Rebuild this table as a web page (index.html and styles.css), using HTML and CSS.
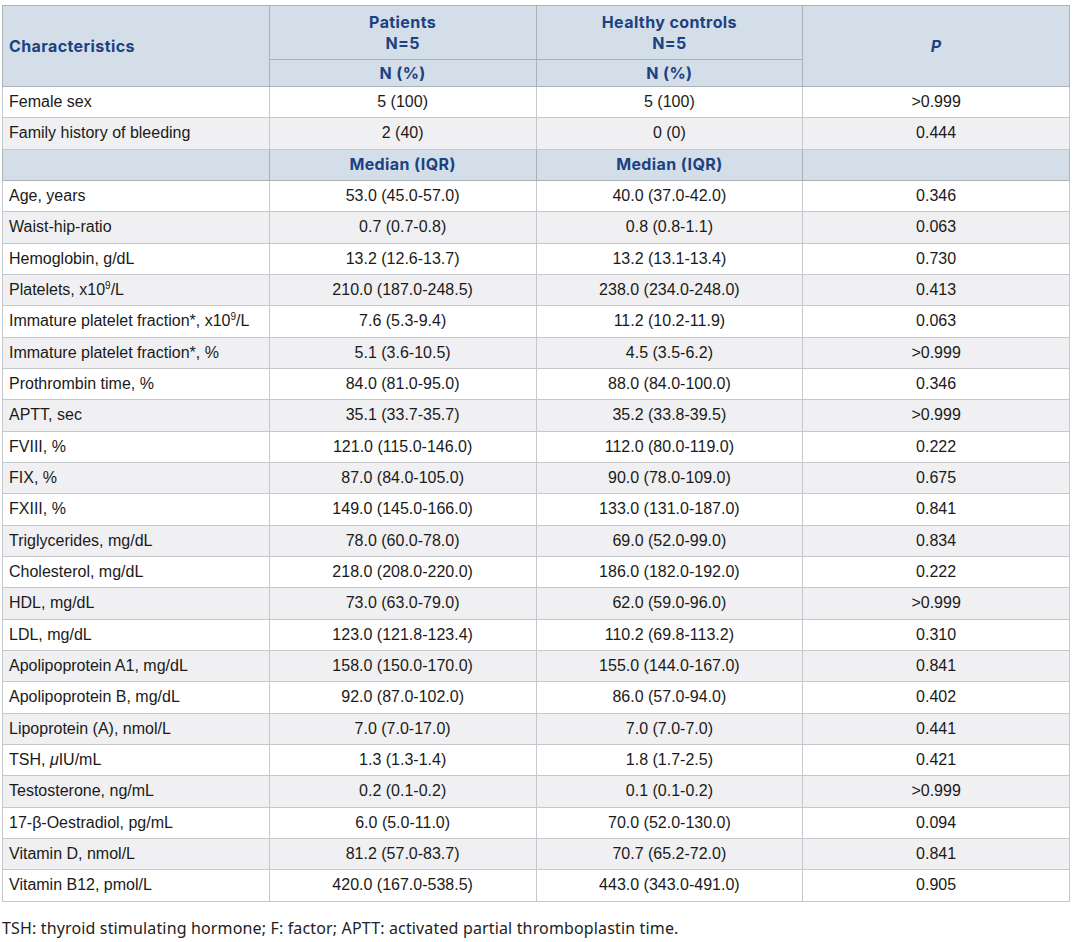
FILE: index.html
```html
<!DOCTYPE html>
<html>
<head>
<meta charset="utf-8">
<link rel="stylesheet" href="styles.css">
</head>
<body>
<div class="page">
<table class="data">
<colgroup><col class="c1"><col class="c2"><col class="c3"><col class="c4"></colgroup>
<thead>
<tr class="h1">
<th class="left" rowspan="2">Characteristics</th>
<th>Patients<br>N=5</th>
<th>Healthy controls<br>N=5</th>
<th rowspan="2"><i>P</i></th>
</tr>
<tr class="h2">
<th>N (%)</th>
<th>N (%)</th>
</tr>
</thead>
<tbody>
<tr><td class="left">Female sex</td><td>5 (100)</td><td>5 (100)</td><td>&gt;0.999</td></tr>
<tr><td class="left">Family history of bleeding</td><td>2 (40)</td><td>0 (0)</td><td>0.444</td></tr>
</tbody>
<tbody class="subhead">
<tr class="sub"><th></th><th>Median (IQR)</th><th>Median (IQR)</th><th></th></tr>
</tbody>
<tbody>
<tr><td class="left">Age, years</td><td>53.0 (45.0-57.0)</td><td>40.0 (37.0-42.0)</td><td>0.346</td></tr>
<tr><td class="left">Waist-hip-ratio</td><td>0.7 (0.7-0.8)</td><td>0.8 (0.8-1.1)</td><td>0.063</td></tr>
<tr><td class="left">Hemoglobin, g/dL</td><td>13.2 (12.6-13.7)</td><td>13.2 (13.1-13.4)</td><td>0.730</td></tr>
<tr><td class="left">Platelets, x10<sup>9</sup>/L</td><td>210.0 (187.0-248.5)</td><td>238.0 (234.0-248.0)</td><td>0.413</td></tr>
<tr><td class="left">Immature platelet fraction*, x10<sup>9</sup>/L</td><td>7.6 (5.3-9.4)</td><td>11.2 (10.2-11.9)</td><td>0.063</td></tr>
<tr><td class="left">Immature platelet fraction*, %</td><td>5.1 (3.6-10.5)</td><td>4.5 (3.5-6.2)</td><td>&gt;0.999</td></tr>
<tr><td class="left">Prothrombin time, %</td><td>84.0 (81.0-95.0)</td><td>88.0 (84.0-100.0)</td><td>0.346</td></tr>
<tr><td class="left">APTT, sec</td><td>35.1 (33.7-35.7)</td><td>35.2 (33.8-39.5)</td><td>&gt;0.999</td></tr>
<tr><td class="left">FVIII, %</td><td>121.0 (115.0-146.0)</td><td>112.0 (80.0-119.0)</td><td>0.222</td></tr>
<tr><td class="left">FIX, %</td><td>87.0 (84.0-105.0)</td><td>90.0 (78.0-109.0)</td><td>0.675</td></tr>
<tr><td class="left">FXIII, %</td><td>149.0 (145.0-166.0)</td><td>133.0 (131.0-187.0)</td><td>0.841</td></tr>
<tr><td class="left">Triglycerides, mg/dL</td><td>78.0 (60.0-78.0)</td><td>69.0 (52.0-99.0)</td><td>0.834</td></tr>
<tr><td class="left">Cholesterol, mg/dL</td><td>218.0 (208.0-220.0)</td><td>186.0 (182.0-192.0)</td><td>0.222</td></tr>
<tr><td class="left">HDL, mg/dL</td><td>73.0 (63.0-79.0)</td><td>62.0 (59.0-96.0)</td><td>&gt;0.999</td></tr>
<tr><td class="left">LDL, mg/dL</td><td>123.0 (121.8-123.4)</td><td>110.2 (69.8-113.2)</td><td>0.310</td></tr>
<tr><td class="left">Apolipoprotein A1, mg/dL</td><td>158.0 (150.0-170.0)</td><td>155.0 (144.0-167.0)</td><td>0.841</td></tr>
<tr><td class="left">Apolipoprotein B, mg/dL</td><td>92.0 (87.0-102.0)</td><td>86.0 (57.0-94.0)</td><td>0.402</td></tr>
<tr><td class="left">Lipoprotein (A), nmol/L</td><td>7.0 (7.0-17.0)</td><td>7.0 (7.0-7.0)</td><td>0.441</td></tr>
<tr><td class="left">TSH, <i>μ</i>IU/mL</td><td>1.3 (1.3-1.4)</td><td>1.8 (1.7-2.5)</td><td>0.421</td></tr>
<tr><td class="left">Testosterone, ng/mL</td><td>0.2 (0.1-0.2)</td><td>0.1 (0.1-0.2)</td><td>&gt;0.999</td></tr>
<tr><td class="left">17-β-Oestradiol, pg/mL</td><td>6.0 (5.0-11.0)</td><td>70.0 (52.0-130.0)</td><td>0.094</td></tr>
<tr><td class="left">Vitamin D, nmol/L</td><td>81.2 (57.0-83.7)</td><td>70.7 (65.2-72.0)</td><td>0.841</td></tr>
<tr><td class="left">Vitamin B12, pmol/L</td><td>420.0 (167.0-538.5)</td><td>443.0 (343.0-491.0)</td><td>0.905</td></tr>
</tbody>
</table>
<p class="note">TSH: thyroid stimulating hormone; F: factor; APTT: activated partial thromboplastin time.</p>
</div>
</body>
</html>
```
FILE: styles.css
```css
html, body {
  margin: 0;
  padding: 0;
  background: #ffffff;
}
.page {
  padding: 5px 0 0 2px;
}
.data {
  width: 1068px;
  border-collapse: collapse;
  table-layout: fixed;
  font-family: "Liberation Sans", Arial, sans-serif;
  font-size: 16px;
  color: #1a1a1a;
}
.data th, .data td {
  border: 1px solid #c6c8cb;
  padding: 0 6px;
  text-align: center;
  vertical-align: middle;
}
.data th {
  background: #d4dee8;
  color: #1b4283;
  font-family: Inter, "Open Sans", sans-serif;
  font-weight: 700;
  font-size: 16px;
  letter-spacing: 0.4px;
  line-height: 21px;
  border-color: #aab1b8;
}
.data .left { text-align: left; }
.data .h1 { height: 54px; }
.data .h2 { height: 27px; }
.data tbody tr { height: 31.33px; }
.data tbody tr:nth-child(even) td { background: #f0f0f2; }
.data sup {
  font-size: 10px;
  line-height: 0;
  vertical-align: 6px;
}
.note {
  margin: 15px 0 0 0;
  font-family: "Noto Sans", sans-serif;
  font-size: 16px;
  letter-spacing: 0.15px;
  color: #222;
}
```
